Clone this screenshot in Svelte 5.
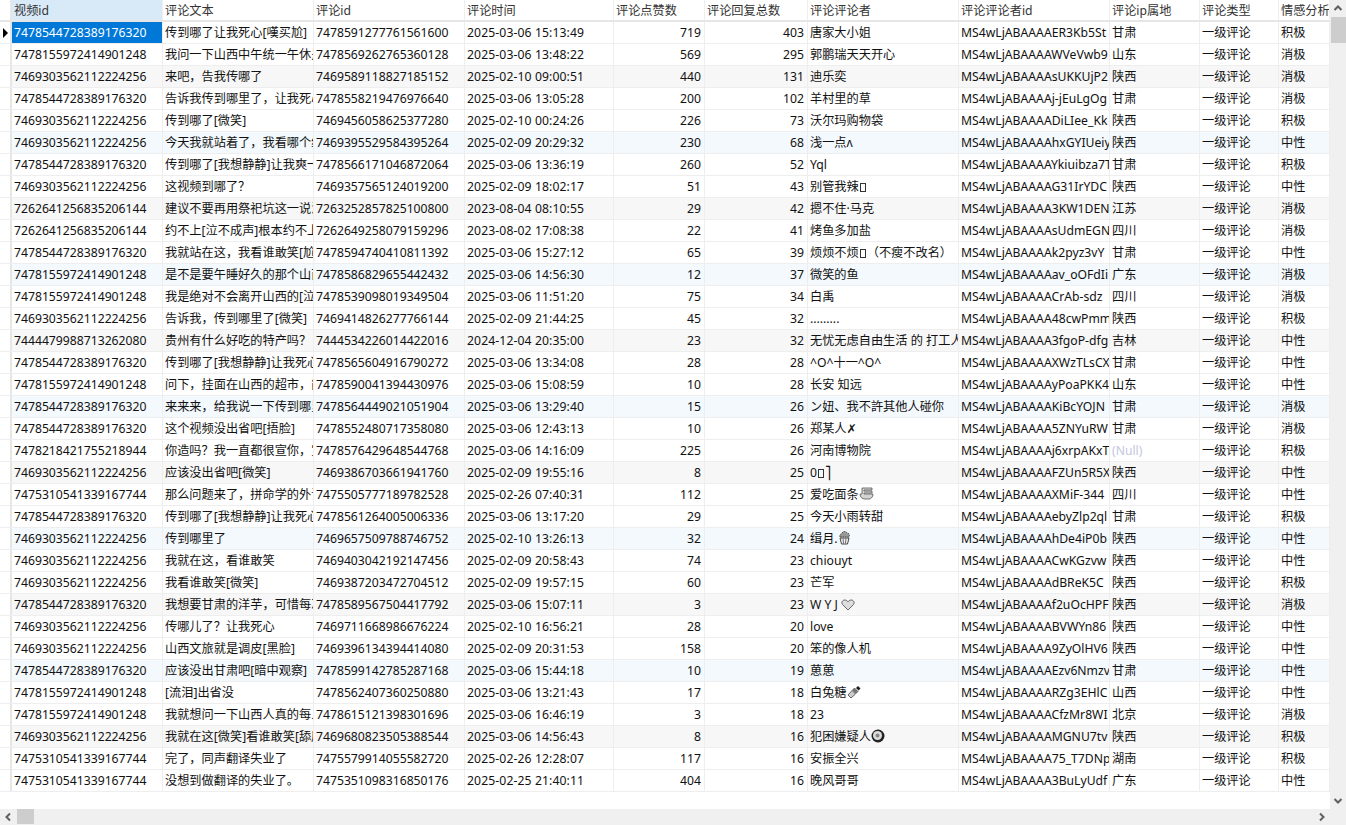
<script>
  const headers = ['视频id', '评论文本', '评论id', '评论时间', '评论点赞数', '评论回复总数', '评论评论者', '评论评论者id', '评论ip属地', '评论类型', '情感分析'];

  const lines = [
    '7478544728389176320|传到哪了让我死心[嘆买尬]|7478591277761561600|2025-03-06 15:13:49|719|403|唐家大小姐|MS4wLjABAAAAER3Kb5St|甘肃|积极',
    '7478155972414901248|我问一下山西中午统一午休是|7478569262765360128|2025-03-06 13:48:22|569|295|郭鹏瑞天天开心|MS4wLjABAAAAWVeVwb9|山东|消极',
    '7469303562112224256|来吧，告我传哪了|7469589118827185152|2025-02-10 09:00:51|440|131|迪乐奕|MS4wLjABAAAAsUKKUjP2|陕西|消极',
    '7478544728389176320|告诉我传到哪里了，让我死心|7478558219476976640|2025-03-06 13:05:28|200|102|羊村里的草|MS4wLjABAAAAj-jEuLgOg|甘肃|消极',
    '7469303562112224256|传到哪了[微笑]|7469456058625377280|2025-02-10 00:24:26|226|73|沃尔玛购物袋|MS4wLjABAAAADiLIee_Kk|陕西|积极',
    '7469303562112224256|今天我就站着了，我看哪个给|7469395529584395264|2025-02-09 20:29:32|230|68|浅一点ʌ|MS4wLjABAAAAhxGYIUeiy|陕西|中性',
    '7478544728389176320|传到哪了[我想静静]让我爽一|7478566171046872064|2025-03-06 13:36:19|260|52|Yql|MS4wLjABAAAAYkiuibza7T|甘肃|积极',
    '7469303562112224256|这视频到哪了？|7469357565124019200|2025-02-09 18:02:17|51|43|别管我辣▯|MS4wLjABAAAAG31IrYDC|陕西|中性',
    '7262641256835206144|建议不要再用祭祀坑这一说法|7263252857825100800|2023-08-04 08:10:55|29|42|摁不住·马克|MS4wLjABAAAA3KW1DEN|江苏|消极',
    '7262641256835206144|约不上[泣不成声]根本约不上|7262649258079159296|2023-08-02 17:08:38|22|41|烤鱼多加盐|MS4wLjABAAAAsUdmEGN|四川|消极',
    '7478544728389176320|我就站在这，我看谁敢笑[尬|7478594740410811392|2025-03-06 15:27:12|65|39|烦烦不烦▯（不瘦不改名）|MS4wLjABAAAAk2pyz3vY|甘肃|中性',
    '7478155972414901248|是不是要午睡好久的那个山西|7478586829655442432|2025-03-06 14:56:30|12|37|微笑的鱼|MS4wLjABAAAAav_oOFdIi|广东|消极',
    '7478155972414901248|我是绝对不会离开山西的[泣|7478539098019349504|2025-03-06 11:51:20|75|34|白禹|MS4wLjABAAAACrAb-sdz|四川|消极',
    '7469303562112224256|告诉我，传到哪里了[微笑]|7469414826277766144|2025-02-09 21:44:25|45|32|.........|MS4wLjABAAAA48cwPmm|陕西|积极',
    '7444479988713262080|贵州有什么好吃的特产吗？|7444534226014422016|2024-12-04 20:35:00|23|32|无忧无虑自由生活 的 打工人|MS4wLjABAAAA3fgoP-dfg|吉林|中性',
    '7478544728389176320|传到哪了[我想静静]让我死心|7478565604916790272|2025-03-06 13:34:08|28|28|^O^十一^O^|MS4wLjABAAAAXWzTLsCX|甘肃|中性',
    '7478155972414901248|问下，挂面在山西的超市，能|7478590041394430976|2025-03-06 15:08:59|10|28|长安 知远|MS4wLjABAAAAyPoaPKK4|山东|中性',
    '7478544728389176320|来来来，给我说一下传到哪里|7478564449021051904|2025-03-06 13:29:40|15|26|ン妞、我不許其他人碰你|MS4wLjABAAAAKiBcYOJN|甘肃|消极',
    '7478544728389176320|这个视频没出省吧[捂脸]|7478552480717358080|2025-03-06 12:43:13|10|26|郑某人✗|MS4wLjABAAAA5ZNYuRW|甘肃|消极',
    '7478218421755218944|你造吗？我一直都很宣你，宣|7478576429648544768|2025-03-06 14:16:09|225|26|河南博物院|MS4wLjABAAAAj6xrpAKxT|(Null)|积极',
    '7469303562112224256|应该没出省吧[微笑]|7469386703661941760|2025-02-09 19:55:16|8|25|0▯⎤|MS4wLjABAAAAFZUn5R5X|陕西|中性',
    '7475310541339167744|那么问题来了，拼命学的外语|7475505777189782528|2025-02-26 07:40:31|112|25|爱吃面条|MS4wLjABAAAAXMiF-344|四川|中性',
    '7478544728389176320|传到哪了[我想静静]让我死心|7478561264005006336|2025-03-06 13:17:20|29|25|今天小雨转甜|MS4wLjABAAAAebyZlp2ql|甘肃|积极',
    '7469303562112224256|传到哪里了|7469657509788746752|2025-02-10 13:26:13|32|24|缉月.|MS4wLjABAAAAhDe4iP0b|陕西|中性',
    '7469303562112224256|我就在这，看谁敢笑|7469403042192147456|2025-02-09 20:58:43|74|23|chiouyt|MS4wLjABAAAACwKGzvw|陕西|中性',
    '7469303562112224256|我看谁敢笑[微笑]|7469387203472704512|2025-02-09 19:57:15|60|23|芒军|MS4wLjABAAAAdBReK5C|陕西|积极',
    '7478544728389176320|我想要甘肃的洋芋，可惜每次|7478589567504417792|2025-03-06 15:07:11|3|23|W Y J|MS4wLjABAAAAf2uOcHPF|陕西|消极',
    '7469303562112224256|传哪儿了？让我死心|7469711668986676224|2025-02-10 16:56:21|28|20|love|MS4wLjABAAAABVWYn86|陕西|中性',
    '7469303562112224256|山西文旅就是调皮[黑脸]|7469396134394414080|2025-02-09 20:31:53|158|20|笨的像人机|MS4wLjABAAAA9ZyOlHV6|陕西|中性',
    '7478544728389176320|应该没出甘肃吧[暗中观察]|7478599142785287168|2025-03-06 15:44:18|10|19|葸葸|MS4wLjABAAAAEzv6Nmzv|甘肃|中性',
    '7478155972414901248|[流泪]出省没|7478562407360250880|2025-03-06 13:21:43|17|18|白兔糖|MS4wLjABAAAARZg3EHlC|山西|中性',
    '7478155972414901248|我就想问一下山西人真的每人|7478615121398301696|2025-03-06 16:46:19|3|18|23|MS4wLjABAAAACfzMr8WI|北京|消极',
    '7469303562112224256|我就在这[微笑]看谁敢笑[舔屏|7469680823505388544|2025-03-06 14:56:43|8|16|犯困嫌疑人|MS4wLjABAAAAMGNU7tv|陕西|积极',
    '7475310541339167744|完了，同声翻译失业了|7475579914055582720|2025-02-26 12:28:07|117|16|安振全兴|MS4wLjABAAAA75_T7DNp|湖南|积极',
    '7475310541339167744|没想到做翻译的失业了。|7475351098316850176|2025-02-25 21:40:11|404|16|晚风哥哥|MS4wLjABAAAA3BuLyUdf|广东|中性'
  ];

  const rows = lines.map((l) => l.split('|'));

  // emoji drawn after the commenter name, keyed by row index
  const icons = { 21: 'noodle', 23: 'cupcake', 26: 'heart', 30: 'bottle', 32: 'swirl' };

  // every third row is tinted, grey and blue in turn
  function tint(i) {
    if ((i + 1) % 3 !== 0) return '';
    return (i + 1) % 6 === 0 ? 'blue' : 'grey';
  }
</script>

<div class="window">
  <div class="middle">
    <div class="grid">
      <div class="row head">
        <div class="gutter"></div>
        {#each headers as h, i}
          <div class="cell" class:active={i === 0}>{h}</div>
        {/each}
      </div>

      {#each rows as r, i}
        <div class="row {tint(i)}">
          <div class="gutter">
            {#if i === 0}<span class="marker"></span>{/if}
          </div>
          <div class="cell" class:selected={i === 0}>{r[0]}</div>
          <div class="cell">{r[1]}</div>
          <div class="cell">{r[2]}</div>
          <div class="cell date">{r[3]}</div>
          <div class="cell num">{r[4]}</div>
          <div class="cell num">{r[5]}</div>
          <div class="cell">
            {#each r[6].split('▯') as part, k}{#if k}<span class="tofu"></span>{/if}{part}{/each}{#if icons[i] === 'noodle'}
              <svg class="emoji" width="15" height="14" viewBox="0 0 15 14"><path d="M3 1h10v2H5v1h8v2H5v1h9c0 3-2 5-4 5H6C3 12 1 10 1 7h2z" fill="#d4d4d4" stroke="#555" stroke-width=".8"/></svg>
            {:else if icons[i] === 'cupcake'}
              <svg class="emoji" width="13" height="14" viewBox="0 0 13 14"><path d="M2 6c-1-3 2-3 2-4 1-2 4-2 5 0 2 0 3 2 2 4z" fill="#999" stroke="#333" stroke-width=".8" stroke-dasharray="1.500 .8"/><path d="M2 7h9l-1.500 6h-6z" fill="#eee" stroke="#333" stroke-width=".9"/><path d="M5 7.500l.6 5M8 7.500l-.6 5" stroke="#555" stroke-width=".8"/></svg>
            {:else if icons[i] === 'heart'}
              <svg class="emoji heart" width="14" height="12" viewBox="0 0 14 12"><path d="M7 11 1.500 5.500C0 3.500 1.500 1 3.800 1 5.300 1 6.500 2 7 3c.5-1 1.700-2 3.200-2 2.300 0 3.800 2.500 2.300 4.500z" fill="#ddd" stroke="#666"/></svg>
            {:else if icons[i] === 'bottle'}
              <svg class="emoji" width="14" height="14" viewBox="0 0 14 14"><path d="M1 10 5 5.500l3.500 3.500L4 13z" fill="#ccc" stroke="#666"/><path d="M5.500 5l2-2 3.500 3.500-2 2z" fill="#777" stroke="#444" stroke-width=".6"/><path d="M9 3l2-2 2.500 2.500-2 2z" fill="#1c1c1c"/></svg>
            {:else if icons[i] === 'swirl'}
              <svg class="emoji" width="14" height="14" viewBox="0 0 14 14"><circle cx="7" cy="7" r="6.500" fill="#222"/><circle cx="6.500" cy="6.500" r="4.500" fill="#ddd"/><circle cx="6.500" cy="6.500" r="2" fill="#888"/></svg>
            {/if}
          </div>
          <div class="cell">{r[7]}</div>
          <div class="cell" class:null={r[8] === '(Null)'}>{r[8]}</div>
          <div class="cell">一级评论</div>
          <div class="cell">{r[9]}</div>
        </div>
      {/each}
    </div>

    <div class="vscroll">
      <svg class="arrow" width="16" height="16" viewBox="0 0 16 16"><path d="M4.500 10 8 6.500l3.500 3.500" fill="none" stroke="#606060" stroke-width="2"/></svg>
      <div class="vthumb"></div>
      <div class="spacer"></div>
      <svg class="arrow" width="16" height="16" viewBox="0 0 16 16"><path d="M4.500 6 8 9.500 11.500 6" fill="none" stroke="#606060" stroke-width="2"/></svg>
    </div>
  </div>

  <div class="hscroll">
    <svg class="arrow" width="16" height="16" viewBox="0 0 16 16"><path d="M10 4.500 6.500 8l3.500 3.500" fill="none" stroke="#606060" stroke-width="2"/></svg>
    <div class="hthumb"></div>
    <div class="spacer"></div>
    <svg class="arrow" width="16" height="16" viewBox="0 0 16 16"><path d="M6 4.500 9.500 8 6 11.500" fill="none" stroke="#606060" stroke-width="2"/></svg>
    <div class="corner"></div>
  </div>
</div>

<style>
  :global(body) {
    margin: 0;
    background: #fff;
  }

  .window {
    width: 1346px;
    height: 825px;
    display: flex;
    flex-direction: column;
    overflow: hidden;
    font-family: 'Noto Sans', 'Noto Sans CJK SC', 'DejaVu Sans', sans-serif;
    font-size: 12.2px;
    color: #111;
  }

  .middle {
    flex: 1;
    display: flex;
    min-height: 0;
  }

  .grid {
    width: 1330px;
  }

  .row {
    display: grid;
    grid-template-columns: 12px 151px 151px 151px 149px 91px 103px 151px 151px 90px 79px 51px;
    height: 22px;
    box-sizing: border-box;
    border-bottom: 1px solid #eeeeee;
  }

  .row.head {
    border-bottom: 2px solid #e6e6e6;
    color: #333;
  }

  .row.grey {
    background: #f7f7f7;
  }

  .row.blue {
    background: #f3f9fd;
  }

  .gutter {
    background: #fff;
    border-right: 2px solid #e6e6e6;
    box-sizing: border-box;
    display: flex;
    align-items: center;
    justify-content: center;
  }

  .marker {
    width: 0;
    height: 0;
    margin-left: 1px;
    border-left: 5px solid #000;
    border-top: 5px solid transparent;
    border-bottom: 5px solid transparent;
  }

  .cell {
    box-sizing: border-box;
    padding-left: 2px;
    border-right: 1px solid #eeeeee;
    line-height: 21px;
    white-space: nowrap;
    overflow: hidden;
  }

  .cell.active {
    background: #d8e9f8;
  }

  .cell.selected {
    background: #0078d7;
    color: #fff;
  }

  .cell.num {
    text-align: right;
    padding-right: 3px;
  }

  .cell.date {
    letter-spacing: 0.1px;
  }

  .cell.null {
    color: #c4c8dc;
  }

  .tofu {
    display: inline-block;
    box-sizing: border-box;
    width: 6px;
    height: 9px;
    margin: 0 1px;
    border: 1px solid #333;
    vertical-align: -1px;
  }

  .emoji {
    vertical-align: -2px;
  }

  .emoji.heart {
    margin-left: 3px;
  }

  .vscroll {
    width: 16px;
    background: #f0f0f0;
    display: flex;
    flex-direction: column;
    align-items: center;
  }

  .vthumb {
    width: 15px;
    height: 26px;
    margin-top: 1px;
    background: #cdcdcd;
  }

  .spacer {
    flex: 1;
  }

  .arrow {
    flex: none;
    display: block;
  }

  .hscroll {
    height: 16px;
    background: #f0f0f0;
    display: flex;
  }

  .hthumb {
    width: 17px;
    height: 15px;
    margin-left: 1px;
    background: #cdcdcd;
  }

  .corner {
    width: 16px;
  }
</style>
